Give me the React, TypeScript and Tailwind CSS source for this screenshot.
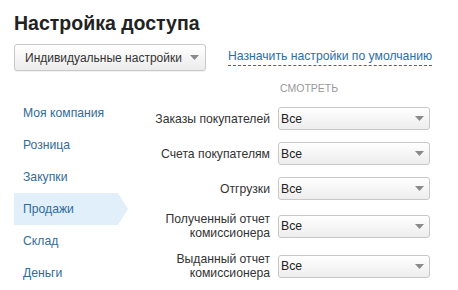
const menu = ['Моя компания', 'Розница', 'Закупки', 'Продажи', 'Склад', 'Деньги']

const rows = [
  ['Заказы покупателей'],
  ['Счета покупателям'],
  ['Отгрузки'],
  ['Полученный отчет', 'комиссионера'],
  ['Выданный отчет', 'комиссионера'],
]

function Caret() {
  return (
    <svg width="9" height="5" viewBox="0 0 9 5" className="shrink-0">
      <path d="M0 0h9L4.5 5z" fill="#8a8a8a" />
    </svg>
  )
}

export default function App() {
  const active = 3

  return (
    <div className="w-[458px] h-[290px] overflow-hidden bg-white px-[14px] pt-[10px] font-['Liberation_Sans',Arial,sans-serif] text-[#333] whitespace-nowrap">
      <h1 className="h-[26px] text-[19.5px] font-bold leading-[26px] text-[#222]">Настройка доступа</h1>

      <div className="mt-[8px] flex h-[27px] items-center">
        <button className="flex h-[27px] w-[192px] items-center justify-between rounded-[3px] border border-[#c8c8c8] bg-gradient-to-b from-white to-[#ececec] pl-[10px] pr-[6px] text-[12px] leading-[14px] text-[#333] shadow-[0_1px_1px_rgba(0,0,0,0.06)]">
          <span>Индивидуальные настройки</span>
          <Caret />
        </button>
        <a className="ml-[22px] border-b border-dashed border-[#2b6ea6] pb-[1px] text-[12.2px] leading-[15px] text-[#2b6ea6]">
          Назначить настройки по умолчанию
        </a>
      </div>

      <div className="mt-[8px] flex">
        <ul className="w-[114px] shrink-0 pt-[18px]">
          {menu.map((m, i) => (
            <li
              key={m}
              className={
                i === active
                  ? 'flex h-[32px] items-center bg-[#e1effa] pl-[9px] text-[12.2px] leading-[14px] text-[#2f6c9b] [clip-path:polygon(0_0,calc(100%-10px)_0,100%_50%,calc(100%-10px)_100%,0_100%)]'
                  : 'flex h-[32px] items-center pl-[9px] text-[12.2px] leading-[14px] text-[#2f6c9b]'
              }
            >
              {m}
            </li>
          ))}
        </ul>

        <div className="flex flex-col gap-[12px] pt-[2px]">
          <div className="flex h-[14px] gap-[8px]">
            <div className="w-[142px]" />
            <div className="pl-[2px] text-[10.5px] leading-[14px] text-[#999]">СМОТРЕТЬ</div>
          </div>
          {rows.map((r) => (
            <div key={r.join(' ')} className={`flex items-center gap-[8px] ${r.length > 1 ? 'h-[28px]' : 'h-[23px]'}`}>
              <div className="w-[142px] text-right text-[12.2px] leading-[14px] text-[#333]">
                {r.map((l) => (
                  <div key={l}>{l}</div>
                ))}
              </div>
              <div className="flex h-[23px] w-[152px] items-center justify-between rounded-[3px] border border-[#c8c8c8] bg-gradient-to-b from-white to-[#ededed] pl-[2px] pr-[5px] text-[12.2px] leading-[14px] text-[#222]">
                <span>Все</span>
                <Caret />
              </div>
            </div>
          ))}
        </div>
      </div>
    </div>
  )
}
